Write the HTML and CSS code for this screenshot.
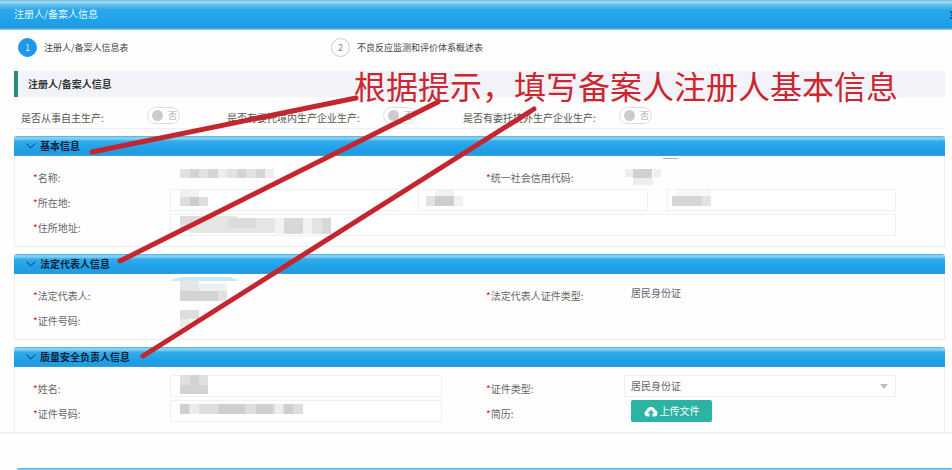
FILE: index.html
```html
<!DOCTYPE html>
<html lang="zh-CN">
<head>
  <meta charset="UTF-8" />
  <meta name="viewport" content="width=device-width, initial-scale=1.0" />
  <title>注册人/备案人信息</title>
  <link rel="stylesheet" href="styles.css">
</head>
<body>
  <header class="topbar">
    <span>注册人/备案人信息</span>
    <svg class="topbar-mark" width="2" height="11" viewBox="0 0 2 11"><path d="M0 3h2M1 6h1M0 9h2" stroke="#0c4a80" stroke-width="1.5"/></svg>
  </header>

  <main class="page">
    <ol class="steps">
      <li class="step active"><span class="step-num">1</span>注册人/备案人信息表</li>
      <li class="step"><span class="step-num">2</span>不良反应监测和评价体系概述表</li>
    </ol>

    <h1 class="page-title">注册人/备案人信息</h1>

    <div class="switches">
      <div class="switch-item">
        <label for="self">是否从事自主生产:</label>
        <span class="switch"><input type="checkbox" id="self" /><span>否</span></span>
      </div>
      <div class="switch-item">
        <label for="domestic">是否有委托境内生产企业生产:</label>
        <span class="switch"><input type="checkbox" id="domestic" /><span>否</span></span>
      </div>
      <div class="switch-item">
        <label for="overseas">是否有委托境外生产企业生产:</label>
        <span class="switch"><input type="checkbox" id="overseas" /><span>否</span></span>
      </div>
    </div>

    <section class="panel">
      <h2 class="panel-head">
        <svg class="chevron" width="10" height="6" viewBox="0 0 10 6"><path d="M.5.5 4.5 5 9.5.5"/></svg>基本信息
      </h2>
      <div class="panel-body">
        <span class="label"><i>*</i>名称:</span>
        <div class="field">
          <svg class="mosaic" width="100" height="22">
            <path fill="#e2e2e2" d="M0 5h38v9H0zM47 5h38v9H47z"/>
            <path fill="#d4d4d4" d="M10 5h9v9h-9zM28 5h10v9H28zM57 5h9v9h-9zM76 5h9v9h-9z"/>
            <path fill="#eee" d="M38 5h9v9h-9zM85 5h9v9h-9z"/>
          </svg>
        </div>
        <span class="label"><i>*</i>统一社会信用代码:</span>
        <div class="field">
          <svg class="mosaic" width="50" height="24">
            <path fill="#9fb4c0" d="M29-6h15v1H29z"/>
            <path fill="#eee" d="M-9 5h8v8h-8zM19 5h8v8h-8zM-1 14h20v7H-1z"/>
            <path fill="#d0d0d0" d="M-1 5h19v9H-1z"/>
          </svg>
        </div>

        <label class="label" for="province"><i>*</i>所在地:</label>
        <div class="field wide region">
          <div class="cell">
            <input type="text" id="province" />
            <svg class="mosaic" width="50" height="22">
              <path fill="#f1f1f1" d="M0 1h19v7H0z"/>
              <path fill="#dedede" d="M0 8h28v9H0z"/>
              <path fill="#cdcdcd" d="M10 8h9v9h-9z"/>
            </svg>
          </div>
          <div class="cell">
            <input type="text" id="city" aria-label="市" />
            <svg class="mosaic" width="50" height="22">
              <path fill="#e2e2e2" d="M-2 7h9v10h-9z"/>
              <path fill="#cdcdcd" d="M7 7h19v10H7z"/>
              <path fill="#f1f1f1" d="M26 7h9v10h-9zM7 0h19v7H7z"/>
            </svg>
          </div>
          <div class="cell">
            <input type="text" id="district" aria-label="区" />
            <svg class="mosaic" width="50" height="22">
              <path fill="#f6f6f6" d="M0 1h33v6H0z"/>
              <path fill="#d6d6d6" d="M-5 7h30v10H-5z"/>
              <path fill="#e4e4e4" d="M25 7h9v10h-9z"/>
            </svg>
          </div>
        </div>

        <label class="label" for="address"><i>*</i>住所地址:</label>
        <div class="field wide">
          <input type="text" id="address" />
          <svg class="mosaic" width="170" height="22">
            <path fill="#e5e5e5" d="M0 2h57v2h38v15H10v-2H0z"/>
            <path fill="#f2f2f2" d="M95 4h38v16H95z"/>
            <path fill="#dcdcdc" d="M48 4h28v10H48zM0 2h19v8H0z"/>
            <path fill="#d8d8d8" d="M104 4h19v16h-19zM142 4h9v16h-9z"/>
            <path fill="#e3e3e3" d="M132 4h10v16h-10z"/>
          </svg>
        </div>
      </div>
    </section>

    <section class="panel">
      <h2 class="panel-head">
        <svg class="chevron" width="10" height="6" viewBox="0 0 10 6"><path d="M.5.5 4.5 5 9.5.5"/></svg>法定代表人信息
      </h2>
      <div class="panel-body">
        <span class="label"><i>*</i>法定代表人:</span>
        <div class="field">
          <svg class="mosaic" width="60" height="22">
            <path fill="#c9e8f8" d="M-10-1Q-4-5 4-5h44q6 0 10 4z"/>
            <path fill="#e6e6e6" d="M0-1h19V9H0z"/>
            <path fill="#f0f0f0" d="M19 2h28v7H19z"/>
            <path fill="#d4d4d4" d="M0 9h38v10H0z"/>
            <path fill="#e2e2e2" d="M38 9h9v10h-9z"/>
          </svg>
        </div>
        <span class="label"><i>*</i>法定代表人证件类型:</span>
        <div class="field"><span class="value">居民身份证</span></div>

        <span class="label"><i>*</i>证件号码:</span>
        <div class="field">
          <svg class="mosaic" width="60" height="22">
            <path fill="#dedede" d="M0 3h19v9H0z"/>
            <path fill="#ebebeb" d="M0 12h10v7H0z"/>
          </svg>
        </div>
      </div>
    </section>

    <section class="panel open">
      <h2 class="panel-head">
        <svg class="chevron" width="10" height="6" viewBox="0 0 10 6"><path d="M.5.5 4.5 5 9.5.5"/></svg>质量安全负责人信息
      </h2>
      <div class="panel-body">
        <label class="label" for="name"><i>*</i>姓名:</label>
        <div class="field">
          <input type="text" id="name" />
          <svg class="mosaic" width="60" height="22">
            <path fill="#e0e0e0" d="M0 0h28v10H0z"/>
            <path fill="#d3d3d3" d="M10 0h9v10H10zM0 10h28v9H0z"/>
          </svg>
        </div>
        <label class="label" for="idType"><i>*</i>证件类型:</label>
        <div class="field">
          <select id="idType"><option>居民身份证</option></select>
          <svg class="caret" width="8" height="5" viewBox="0 0 8 5"><path d="M0 0h8L4 5z"/></svg>
        </div>

        <label class="label" for="idNo"><i>*</i>证件号码:</label>
        <div class="field">
          <input type="text" id="idNo" />
          <svg class="mosaic" width="130" height="22">
            <path fill="#dedede" d="M0 4h123v10H0z"/>
            <path fill="#cfcfcf" d="M0 4h9v10H0zM38 4h27v10H38zM76 4h17v10H76zM104 4h9v10h-9z"/>
            <path fill="#ececec" d="M10 4h9v10h-9zM95 4h8v10h-8z"/>
          </svg>
        </div>
        <span class="label"><i>*</i>简历:</span>
        <div class="field">
          <button type="button" class="upload">
            <svg width="14" height="11" viewBox="0 0 14 11"><path fill="#fff" d="M3.4 10.4a3.1 3.1 0 0 1-.9-6A4.6 4.6 0 0 1 11.3 4a3.3 3.3 0 0 1-.6 6.4H8.4V7.4h2L7 3.8 3.6 7.4h2v3z"/></svg>上传文件
          </button>
        </div>
      </div>
    </section>
  </main>

  <div class="divider"></div>
  <footer class="next"><div class="panel-head"></div></footer>

  <!-- 标注 -->
  <svg class="arrows" width="560" height="380">
    <path d="M92 152 356 98M120 261 438 102M143 356 534 109"/>
  </svg>
  <p class="note">根据提示，填写备案人注册人基本信息</p>
</body>
</html>
```
FILE: styles.css
```css
* {
  box-sizing: border-box;
}
body {
  position: relative;
  height: 100vh;
  margin: 0;
  overflow: hidden;
  background: #fefefe;
  color: #666;
  font-family: "Noto Sans CJK SC", sans-serif;
  font-size: 10px;
  line-height: 16px;
}
h1, h2, p, ol {
  margin: 0;
  padding: 0;
}
input, select, button {
  margin: 0;
  font: inherit;
  color: inherit;
}

.topbar {
  display: flex;
  align-items: center;
  justify-content: space-between;
  height: 30px;
  padding-left: 14px;
  padding-bottom: 2px;
  background: linear-gradient(#6db9e2 0, #a5dcf6 2px, #5fc0f0 5px, #2ba6e9 10px, #1da1ec 22px, #2499d8 28px, #9fd8f5 30px);
  color: #e4f5ff;
}
.topbar-mark {
  display: block;
}
.page {
  padding: 0 7px 0 14px;
}

.steps {
  display: flex;
  list-style: none;
  padding: 8px 4px;
}
.step {
  display: flex;
  align-items: center;
  gap: 7px;
  width: 313px;
  font-size: 9px;
  color: #444;
}
.step-num {
  width: 19px;
  height: 19px;
  border: 1px solid #ccc;
  border-radius: 50%;
  text-align: center;
  line-height: 17px;
  color: #888;
}
.active .step-num {
  border-color: #2196ea;
  background: #2196ea;
  color: #d8efff;
}

.page-title {
  margin-top: 6px;
  padding: 5px 10px;
  border-left: 4px solid #2b8a7a;
  background: #f1f3f8;
  color: #333;
  font-size: 10px;
  font-weight: 700;
}

.switches {
  display: grid;
  grid-template-columns: 206px 236px 236px;
  height: 32px;
  padding: 10px 7px 0;
  border-bottom: 1px solid #eeeef4;
  color: #555;
}
.switch-item {
  display: flex;
  justify-content: space-between;
  padding-right: 47px;
  white-space: nowrap;
}
.switch-item label {
  padding-top: 3px;
}
.switch {
  display: flex;
  align-items: center;
  gap: 5px;
  width: 33px;
  height: 17px;
  padding-left: 4px;
  border: 1px solid #ddd;
  border-radius: 9px;
  background: #fff;
  color: #aaa;
  font-size: 9px;
}
.switch input {
  appearance: none;
  width: 11px;
  height: 11px;
  border-radius: 50%;
  background: #ccc;
}

.panel {
  margin-top: 7px;
  border: 1px solid #ececf2;
  border-top: 0;
}
.panel-head {
  display: flex;
  align-items: center;
  gap: 4px;
  height: 20px;
  margin: 0 -1px;
  padding-left: 12px;
  border-radius: 3px 3px 0 0;
  background: linear-gradient(#4a9cc8 0, #7fd0f6 1px, #7fd0f6 3px, #35abea 5px, #1fa2ea 12px, #2499dc 19px, #4ba9dd 20px);
  color: #0c2238;
  font-size: 10px;
  font-weight: 700;
}
.chevron {
  fill: none;
  stroke: #0c3a60;
}
.panel-body {
  display: grid;
  grid-template-columns: 137px 1fr 182px 1fr;
  row-gap: 3px;
  padding: 8px 48px 10px 18px;
}
.open {
  border-bottom: 0;
}
.label {
  padding-top: 6px;
  white-space: nowrap;
}
.label i {
  color: #c22;
  font-style: normal;
}
.label:nth-child(4n + 3) {
  padding-left: 44px;
}
.field {
  position: relative;
  height: 22px;
}
.wide {
  grid-column: span 3;
}
.wide + .label {
  padding-left: 0;
}
.region {
  display: flex;
  gap: 19px;
}
.cell {
  position: relative;
  flex: 1;
}
.field input, .field select {
  display: block;
  width: 100%;
  height: 22px;
  padding: 0 6px;
  border: 1px solid #f0f0f0;
  border-radius: 0;
  background: #fff;
}
.field select {
  appearance: none;
}
.value {
  display: block;
  padding: 3px 7px;
}
.mosaic {
  position: absolute;
  top: 0;
  left: 10px;
  overflow: visible;
  pointer-events: none;
}
.caret {
  position: absolute;
  top: 9px;
  right: 8px;
  fill: #bbb;
  pointer-events: none;
}
.upload {
  display: flex;
  align-items: center;
  justify-content: center;
  gap: 2px;
  width: 81px;
  height: 22px;
  margin-left: 7px;
  padding: 0;
  border: 0;
  border-radius: 2px;
  background: #2bb3a3;
  color: #fff;
}

.divider {
  height: 2px;
  background: #f2f2f2;
}
.next {
  padding: 34px 0 0 17px;
}

.arrows {
  position: absolute;
  top: 0;
  left: 0;
  fill: none;
  stroke: #c4262f;
  stroke-width: 5;
  stroke-linecap: round;
  pointer-events: none;
}
.note {
  position: absolute;
  top: 65px;
  left: 354px;
  color: #cc2630;
  font-size: 32px;
  line-height: 40px;
  white-space: nowrap;
}
```
